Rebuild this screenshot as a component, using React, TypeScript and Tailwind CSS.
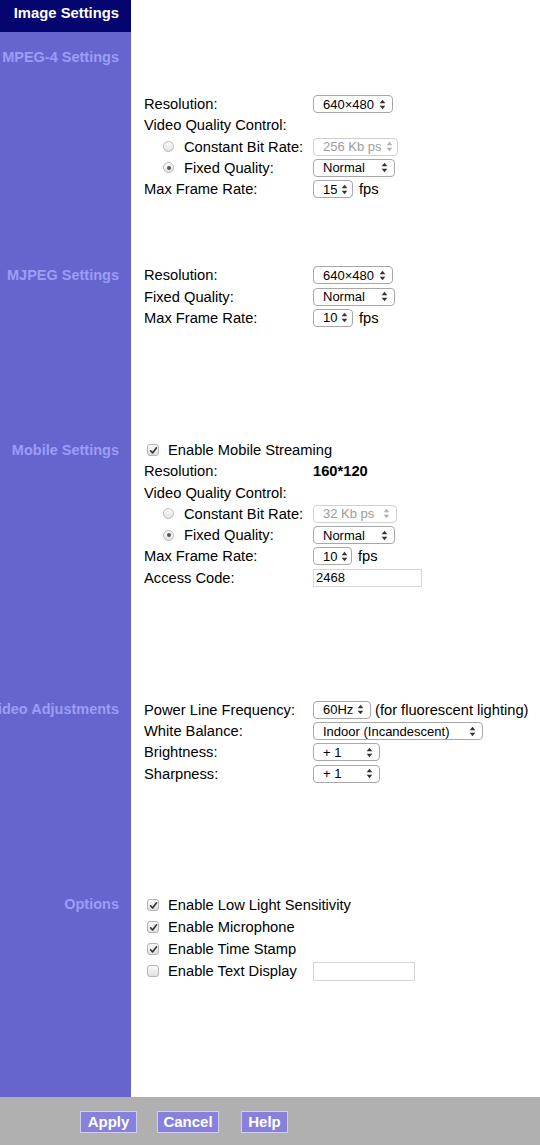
import React from "react";

const FONT = { fontFamily: '"Liberation Sans", Arial, Helvetica, sans-serif' };

function Arrows({ disabled }: { disabled?: boolean }) {
  const c = disabled ? "#b0b0b0" : "#333";
  return (
    <svg width="7" height="11" viewBox="0 0 7 11" className="shrink-0">
      <path d="M3.5 0.8 L6.3 4.3 L0.7 4.3 Z" fill={c} />
      <path d="M3.5 10.2 L6.3 6.7 L0.7 6.7 Z" fill={c} />
    </svg>
  );
}

function Sel({ text, w, disabled }: { text: string; w: string; disabled?: boolean }) {
  return (
    <span
      className={`inline-flex h-[18px] items-center justify-between gap-[4px] rounded-[4px] border bg-white pl-[9px] pr-[6px] text-[13px] leading-none ${w} ${
        disabled ? "border-[#d0d0d0] text-[#9c9c9c]" : "border-[#a8a8a8] text-black"
      }`}
    >
      <span className="whitespace-nowrap">{text}</span>
      <Arrows disabled={disabled} />
    </span>
  );
}

function Check({ on }: { on: boolean }) {
  return (
    <span className="inline-flex h-[12px] w-[12px] shrink-0 items-center justify-center rounded-[3px] border border-[#b4b4b4] bg-gradient-to-b from-[#fbfbfb] to-[#e0e0e0]">
      {on && (
        <svg width="9" height="9" viewBox="0 0 9 9">
          <path d="M1.6 4.8 L3.6 7 L7.5 1.8" stroke="#333" strokeWidth="1.6" fill="none" strokeLinecap="round" strokeLinejoin="round" />
        </svg>
      )}
    </span>
  );
}

function Radio({ on }: { on: boolean }) {
  return (
    <span className="inline-flex h-[11px] w-[11px] shrink-0 items-center justify-center rounded-full border border-[#b8b8b8] bg-gradient-to-b from-[#fdfdfd] to-[#e2e2e2]">
      {on && <span className="h-[4px] w-[4px] rounded-full bg-[#555]" />}
    </span>
  );
}

function Row({ label, children, indent, h }: { label: React.ReactNode; children?: React.ReactNode; indent?: boolean; h?: string }) {
  return (
    <div className={`flex items-center ${h ?? "h-[21.25px]"}`}>
      <div className={`flex w-[169px] shrink-0 items-center whitespace-nowrap ${indent ? "pl-[19px]" : ""}`}>{label}</div>
      <div className="flex items-center gap-[6px]">{children}</div>
    </div>
  );
}

function RadioLabel({ on, text }: { on: boolean; text: string }) {
  return (
    <span className="flex items-center gap-[10px]">
      <Radio on={on} />
      <span>{text}</span>
    </span>
  );
}

function CheckRow({ on, text, children }: { on: boolean; text: string; children?: React.ReactNode }) {
  return (
    <div className="flex h-[22px] items-center">
      <div className="flex w-[169px] shrink-0 items-center gap-[9px] pl-[3px] whitespace-nowrap">
        <Check on={on} />
        <span>{text}</span>
      </div>
      {children}
    </div>
  );
}

function Section({
  label,
  children,
  labelPt,
  contentPt,
  pb,
}: {
  label: string;
  children: React.ReactNode;
  labelPt: string;
  contentPt: string;
  pb: string;
}) {
  return (
    <div className="flex">
      <div className={`flex w-[131px] shrink-0 justify-end overflow-hidden bg-[#6565cd] pr-[12px] ${labelPt}`}>
        <span className="h-[21px] whitespace-nowrap text-[14.5px] leading-[21px] font-bold text-[#9d9cf7]">{label}</span>
      </div>
      <div className={`flex-1 bg-white pl-[13px] text-[14.7px] text-black ${contentPt} ${pb}`}>{children}</div>
    </div>
  );
}

function Btn({ text, w }: { text: string; w: string }) {
  return (
    <span
      className={`inline-flex h-[22px] items-center justify-center border border-[#cfcff2] bg-[#8781dd] text-[15px] font-bold text-white ${w}`}
    >
      {text}
    </span>
  );
}

export default function App() {
  return (
    <div className="min-h-[1145px] w-[540px] overflow-hidden bg-white" style={FONT}>
      <div className="flex h-[32px]">
        <div className="flex w-[131px] shrink-0 items-center justify-end bg-[#05056f] pr-[12px] pb-[5px]">
          <span className="text-[14.8px] font-bold whitespace-nowrap text-white">Image Settings</span>
        </div>
        <div className="flex-1 bg-white" />
      </div>

      <Section label="MPEG-4 Settings" labelPt="pt-[15px]" contentPt="pt-[61.5px]" pb="pb-[65px]">
        <Row label="Resolution:">
          <Sel text="640×480" w="w-[80px]" />
        </Row>
        <Row label="Video Quality Control:" />
        <Row indent label={<RadioLabel on={false} text="Constant Bit Rate:" />}>
          <Sel text="256 Kb ps" w="w-[85px]" disabled />
        </Row>
        <Row indent label={<RadioLabel on={true} text="Fixed Quality:" />}>
          <Sel text="Normal" w="w-[82px]" />
        </Row>
        <Row label="Max Frame Rate:">
          <Sel text="15" w="w-[40px]" />
          <span>fps</span>
        </Row>
      </Section>

      <Section label="MJPEG Settings" labelPt="pt-0" contentPt="pt-0" pb="pb-[111px]">
        <Row label="Resolution:">
          <Sel text="640×480" w="w-[80px]" />
        </Row>
        <Row label="Fixed Quality:">
          <Sel text="Normal" w="w-[82px]" />
        </Row>
        <Row label="Max Frame Rate:">
          <Sel text="10" w="w-[40px]" />
          <span>fps</span>
        </Row>
      </Section>

      <Section label="Mobile Settings" labelPt="pt-0" contentPt="pt-0" pb="pb-[111px]">
        <div className="flex h-[21.25px] items-center gap-[9px] pl-[3px]">
          <Check on={true} />
          <span>Enable Mobile Streaming</span>
        </div>
        <Row label="Resolution:">
          <span className="font-bold">160*120</span>
        </Row>
        <Row label="Video Quality Control:" />
        <Row indent label={<RadioLabel on={false} text="Constant Bit Rate:" />}>
          <Sel text="32 Kb ps" w="w-[84px]" disabled />
        </Row>
        <Row indent label={<RadioLabel on={true} text="Fixed Quality:" />}>
          <Sel text="Normal" w="w-[82px]" />
        </Row>
        <Row label="Max Frame Rate:">
          <Sel text="10" w="w-[39px]" />
          <span>fps</span>
        </Row>
        <Row label="Access Code:">
          <span className="flex h-[18px] w-[109px] items-center border border-[#d6d6d6] bg-white pl-[2px] text-[13px]">2468</span>
        </Row>
      </Section>

      <Section label="Video Adjustments" labelPt="pt-0" contentPt="pt-0" pb="pb-[110px]">
        <Row label="Power Line Frequency:">
          <span className="flex items-center gap-[4px] whitespace-nowrap">
            <Sel text="60Hz" w="w-[58px]" />
            <span>(for fluorescent lighting)</span>
          </span>
        </Row>
        <Row label="White Balance:">
          <Sel text="Indoor (Incandescent)" w="w-[170px]" />
        </Row>
        <Row label="Brightness:">
          <Sel text="+ 1" w="w-[67px]" />
        </Row>
        <Row label="Sharpness:">
          <Sel text="+ 1" w="w-[67px]" />
        </Row>
      </Section>

      <Section label="Options" labelPt="pt-0" contentPt="pt-0" pb="pb-[115px]">
        <CheckRow on={true} text="Enable Low Light Sensitivity" />
        <CheckRow on={true} text="Enable Microphone" />
        <CheckRow on={true} text="Enable Time Stamp" />
        <CheckRow on={false} text="Enable Text Display">
          <span className="h-[19px] w-[102px] border border-[#d6d6d6] bg-white" />
        </CheckRow>
      </Section>

      <div className="flex h-[48px] items-center bg-[#b0b0b0] pt-[1px] pl-[80px]">
        <Btn text="Apply" w="w-[57px]" />
        <span className="w-[20px]" />
        <Btn text="Cancel" w="w-[62px]" />
        <span className="w-[22px]" />
        <Btn text="Help" w="w-[47px]" />
      </div>
    </div>
  );
}
